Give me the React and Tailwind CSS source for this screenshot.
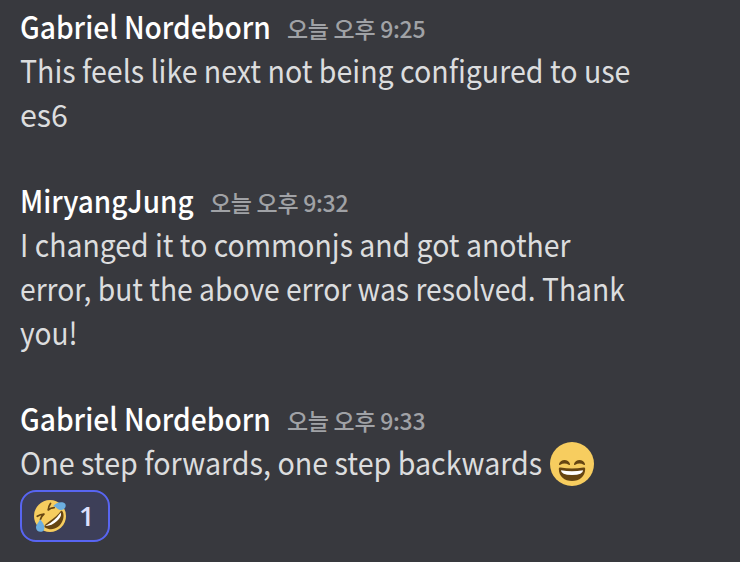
const messages = [
  {
    author: "Gabriel Nordeborn",
    nameBox: "w-[251px]",
    nameClass: "scale-x-[0.908]",
    time: "9:25",
    lines: [
      { text: "This feels like next not being configured to use", className: "scale-x-[0.921]" },
      { text: "es6", className: "scale-x-[0.980]" },
    ],
  },
  {
    author: "MiryangJung",
    nameBox: "w-[174px]",
    nameClass: "scale-x-[0.900]",
    time: "9:32",
    lines: [
      { text: "I changed it to commonjs and got another", className: "scale-x-[0.916]" },
      { text: "error, but the above error was resolved. Thank", className: "scale-x-[0.911]" },
      { text: "you!", className: "scale-x-[0.905]" },
    ],
  },
  {
    author: "Gabriel Nordeborn",
    nameBox: "w-[251px]",
    nameClass: "scale-x-[0.908]",
    time: "9:33",
    lines: [
      { text: "One step forwards, one step backwards", className: "scale-x-[0.924]", emoji: true },
    ],
  },
];

function GrinEmoji() {
  return (
    <svg viewBox="0 0 44 44" className="mt-1 ml-2 size-11 shrink-0">
      <circle cx="22" cy="22" r="22" fill="#f7cd5f" />
      <path d="M8.800 26.700q0-1.500 1.800-1.100 11.400 2 22.800 0 1.800-.4 1.800 1.100C35.200 34.500 29.500 39 22 39S8.800 34.500 8.800 26.700Z" fill="#664512" />
      <path d="M11 28.200q11 1.900 22 0 .3 4.800-11 4.800t-11-4.800Z" fill="#fff" />
      <path d="M9 22C10.500 16.800 18.500 16.800 20 22q.2 1.600-1.300.8-4.200-2.600-8.400 0Q8.800 23.600 9 22ZM24 22c1.500-5.200 9.500-5.200 11 0q.2 1.600-1.300.8-4.200-2.600-8.400 0Q23.800 23.600 24 22Z" fill="#664512" />
    </svg>
  );
}

function RoflEmoji() {
  return (
    <svg viewBox="0 0 32 32" className="size-8 shrink-0">
      <circle cx="16" cy="16" r="16" fill="#f7cd5f" />
      <path d="M11 27.500C9.500 26.500 11 24.500 14.500 22 20.500 18 24.500 14.500 27 10.800 28.800 9.800 30.500 15 29 19.500 26 28.500 17.500 31.500 11 27.500Z" fill="#664512" />
      <path d="M11.300 26q9-4.500 15.500-13.500 1.200 4-3.800 8.600-5.700 5.200-11.700 4.900Z" fill="#fff" />
      <path d="M3.300 16.300q3-2 6.700-2.300-2.500 2-3.500 5.300M16.500 3.500q-2 2.700-2.300 6.500 2.500-2.200 6-2.300" fill="none" stroke="#664512" strokeWidth="1.700" strokeLinecap="round" strokeLinejoin="round" />
      <path d="M19.300 6C22 2 28.500 1 31 3.500c2 3-.5 6.800-4.500 6.500-3.200-.3-4-2.800-7.200-4Z" fill="#6caee0" />
      <path d="M6 19.300c3 3 5.800 8 3.800 10.900-2.300 3-7.800 1.500-7.800-2.700 0-3.200 3.200-5.200 4-8.200Z" fill="#6caee0" />
    </svg>
  );
}

export default function App() {
  return (
    <main className="flex h-[562px] w-[740px] flex-col gap-[42px] overflow-hidden bg-[#38393e] pt-1 pl-5 font-['Noto_Sans_CJK_KR',sans-serif] text-[31px] leading-[44px] whitespace-nowrap text-[#dcddde]">
      {messages.map((message, index) => (
        <article key={index} className="flex flex-col items-start">
          <header className="flex h-11 items-baseline gap-4">
            <h2 className={`font-medium text-white ${message.nameBox}`}>
              <span className={`inline-block origin-left ${message.nameClass}`}>{message.author}</span>
            </h2>
            <time className="-translate-y-px text-[23px] leading-[42px] font-medium tracking-[-0.3px] text-[#a0a2a6]">오늘 오후 {message.time}</time>
          </header>
          {message.lines.map((line) => (
            <div key={line.text} className="flex h-11 items-center">
              <span className={line.emoji ? "w-[522px]" : ""}>
                <span className={`inline-block origin-left ${line.className}`}>{line.text}</span>
              </span>
              {line.emoji && <GrinEmoji />}
            </div>
          ))}
          {message.lines[0].emoji && (
            <button className="mt-1.5 flex h-[52px] w-[90px] items-center gap-[13px] rounded-2xl border-2 border-[#5865f2] bg-[#3d3f58] pl-3">
              <RoflEmoji />
              <span className="font-['Open_Sans',sans-serif] text-[27px] font-semibold text-[#dee0fc]">1</span>
            </button>
          )}
        </article>
      ))}
    </main>
  );
}
